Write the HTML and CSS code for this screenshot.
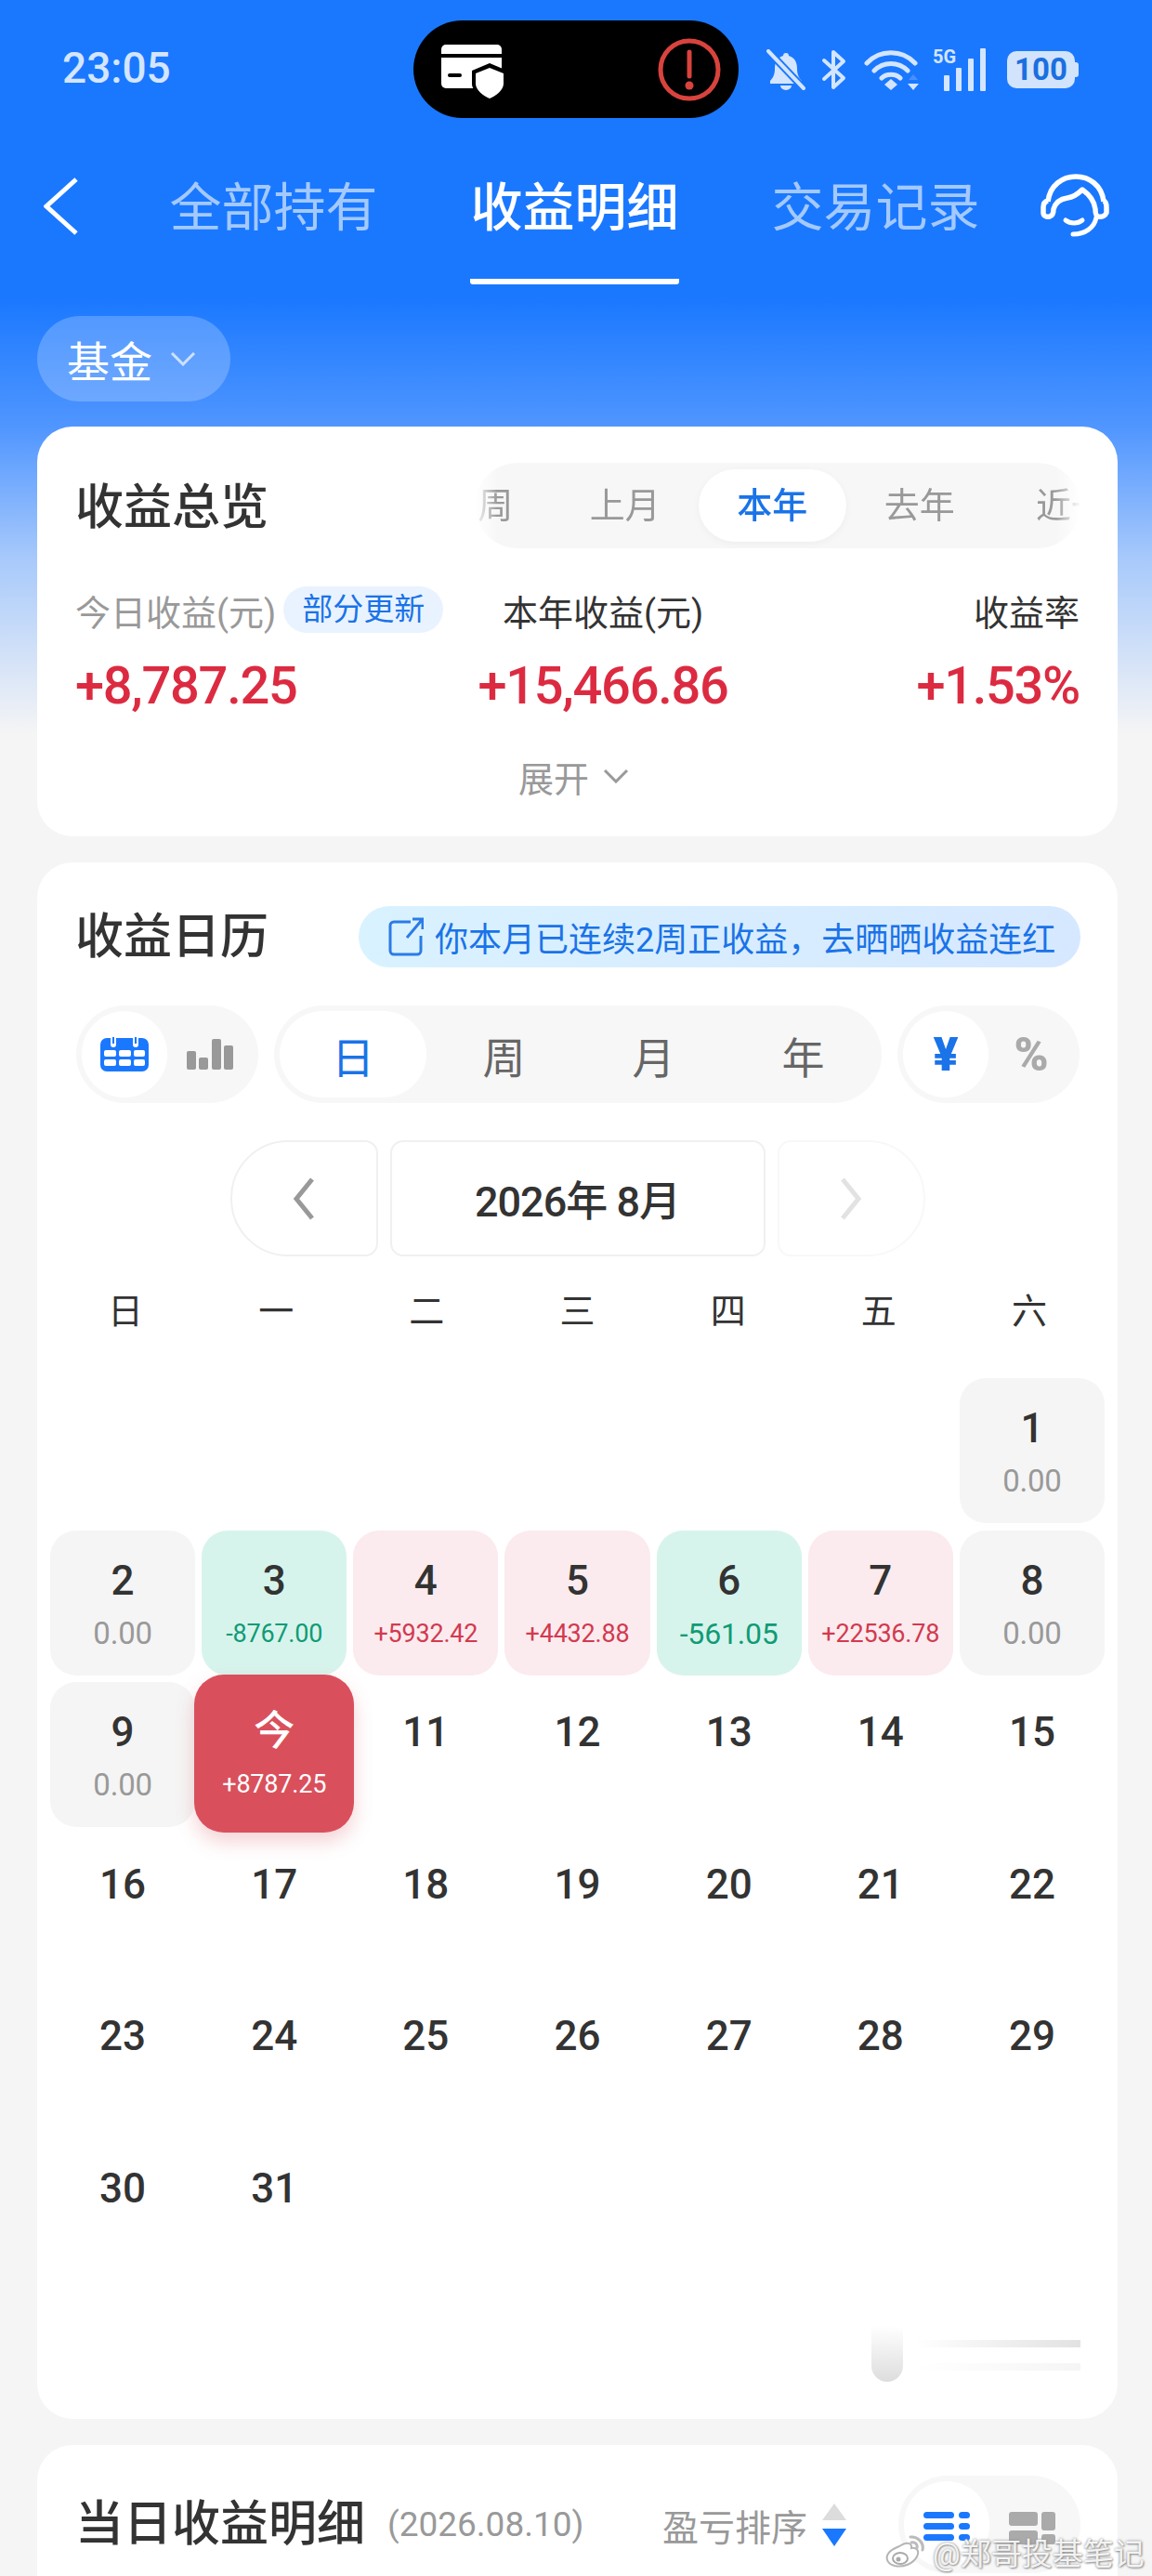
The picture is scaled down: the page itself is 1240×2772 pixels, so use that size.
FILE: index.html
```html
<!DOCTYPE html>
<html lang="zh-CN">
<head>
    <meta charset="UTF-8">
    <title>收益明细</title>
    <link rel="stylesheet" href="styles.css">
</head>
<body>
<div class="page">
    <div class="status">
        <span class="time">23:05</span>
        <div class="island">
            <svg class="card-ic" width="68" height="62" viewBox="15 16 68 62">
                <path d="M20 18H75a5 5 0 0 1 5 5V28H15V23a5 5 0 0 1 5-5Z" fill="#fff"/>
                <path d="M15 32H80V60a5 5 0 0 1-5 5H20a5 5 0 0 1-5-5Z" fill="#fff"/>
                <rect x="22" y="49" width="15" height="4" rx="2" fill="#000"/>
                <path d="M67 38L86 46V60C86 68 76 76 67 79C58 76 48 68 48 60V46Z" fill="#000"/>
                <path d="M67 43L82 49V60C82 67 74 73 67 76C60 73 52 67 52 60V49Z" fill="#fff"/>
            </svg>
            <svg width="70" height="70" viewBox="0 0 70 70">
                <ellipse cx="35" cy="35" rx="31" ry="31" fill="none" stroke="#d9433d" stroke-width="5"/>
                <path d="M35 16V42" stroke="#d9433d" stroke-width="5" stroke-linecap="round"/>
                <circle cx="35" cy="52" r="4.5" fill="#d9433d"/>
            </svg>
        </div>
        <div class="status-icons">
            <svg width="42" height="44" viewBox="0 0 42 44">
                <path d="M21 4a3 3 0 0 1 3 3c7 2 9 8 9 14 0 6 2 10 5 13v3H4v-3c3-3 5-7 5-13 0-6 2-12 9-14a3 3 0 0 1 3-3ZM15 39h12a6 5 0 0 1-12 0Z" fill="#d4e5ff"/>
                <path d="M2 2L40 42" stroke="#1a78ff" stroke-width="8"/>
                <path d="M2 2L40 42" stroke="#d4e5ff" stroke-width="4" stroke-linecap="round"/>
            </svg>
            <svg class="bt" width="28" height="44" viewBox="0 0 28 44">
                <path d="M3 12L24 31L13 41V3L24 13L3 32" fill="none" stroke="#d4e5ff" stroke-width="4" stroke-linejoin="round" stroke-linecap="round"/>
            </svg>
            <svg class="wifi" width="60" height="44" viewBox="0 0 60 44">
                <path d="M3 15C17 0 41 0 55 15M11 23C21 13 37 13 47 23M19 31C24 26 34 26 39 31" fill="none" stroke="#d4e5ff" stroke-width="5" stroke-linecap="round"/>
                <path d="M29 32L36 38L29 44L22 38Z" fill="#d4e5ff"/>
                <path d="M53 27L58 33H48Z" fill="#4a8fff"/>
                <path d="M53 44L59 37H47Z" fill="#d4e5ff"/>
            </svg>
            <svg class="signal" width="58" height="46" viewBox="0 0 58 46">
                <text x="0" y="16" class="fiveg">5G</text>
                <rect x="12" y="29" width="6" height="17" rx="1" fill="#d4e5ff"/>
                <rect x="25" y="21" width="6" height="25" rx="1" fill="#d4e5ff"/>
                <rect x="38" y="11" width="6" height="35" rx="1" fill="#d4e5ff"/>
                <rect x="51" y="0" width="6" height="46" rx="1" fill="#d4e5ff"/>
            </svg>
            <div class="battery"><span>100</span></div>
        </div>
    </div>

    <div class="tabs">
        <svg class="back" width="38" height="62" viewBox="0 0 38 62">
            <path d="M35 2L3 31L35 60" fill="none" stroke="#fff" stroke-width="5"/>
        </svg>
        <div class="tab first">全部持有</div>
        <div class="tab on">收益明细</div>
        <div class="tab">交易记录</div>
        <svg class="help" width="76" height="68" viewBox="14 12 76 68">
            <path d="M22 42C24 24 38 15 52 15C66 15 80 24 82 42" fill="none" stroke="#fff" stroke-width="5.5"/>
            <path d="M22 41C18 42 17 45 17 48V54C17 57 20 59 24 58C27 57 28 54 28 50C30 43 36 39 43 38C50 37 55 33 59 29C66 34 72 42 73 50C73 53 73 57 76 58C80 59 84 57 85 54V48C85 45 84 42 82 41" fill="none" stroke="#fff" stroke-width="5.5" stroke-linejoin="round"/>
            <path d="M41 62C46 66 54 66 59 62" fill="none" stroke="#fff" stroke-width="5" stroke-linecap="round"/>
            <path d="M74 59C72 70 62 77 49 77" fill="none" stroke="#fff" stroke-width="5" stroke-linecap="round"/>
        </svg>
    </div>

    <div class="filter">基金
        <svg width="28" height="16" viewBox="0 0 28 16"><path d="M2 2L14 14L26 2" fill="none" stroke="#cfe1ff" stroke-width="3"/></svg>
    </div>

    <div class="card overview">
        <div class="head">
            <div class="title">收益总览</div>
            <div class="range">
                <div class="range-track">
                    <span>上周</span>
                    <span>上月</span>
                    <span class="on">本年</span>
                    <span>去年</span>
                    <span class="last">近一年</span>
                </div>
            </div>
        </div>
        <div class="stats">
            <div class="stat">
                <div class="stat-label muted">今日收益(元)<em class="badge">部分更新</em></div>
                <div class="stat-num">+8,787.25</div>
            </div>
            <div class="stat mid">
                <div class="stat-label">本年收益(元)</div>
                <div class="stat-num">+15,466.86</div>
            </div>
            <div class="stat end">
                <div class="stat-label">收益率</div>
                <div class="stat-num">+1.53%</div>
            </div>
        </div>
        <div class="more">展开
            <svg width="28" height="16" viewBox="0 0 28 16"><path d="M2 2L14 14L26 2" fill="none" stroke="#999" stroke-width="3"/></svg>
        </div>
    </div>

    <div class="card calendar">
        <div class="head cal-head">
            <div class="title">收益日历</div>
            <div class="banner">
                <svg width="38" height="42" viewBox="0 0 38 42">
                    <path d="M24 5H6a4 4 0 0 0-4 4V36a4 4 0 0 0 4 4H31a4 4 0 0 0 4-4V20" fill="none" stroke="#2b7be6" stroke-width="3"/>
                    <path d="M20 22L36 3M26 2H37V13" fill="none" stroke="#2b7be6" stroke-width="3"/>
                </svg>
                你本月已连续2周正收益，去晒晒收益连红
            </div>
        </div>
        <div class="controls">
            <div class="seg small">
                <div class="seg-item on">
                    <svg width="54" height="38" viewBox="0 0 54 38">
                        <path d="M7 1H46a7 7 0 0 1 7 7V30a7 7 0 0 1-7 7H8a7 7 0 0 1-7-7V8a7 7 0 0 1 7-7Z" fill="#1a78ff"/>
                        <path d="M15 0V8M39 0V8" stroke="#fff" stroke-width="6" stroke-linecap="round"/>
                        <path d="M15 0V7M39 0V7" stroke="#1a78ff" stroke-width="2"/>
                        <g fill="#fff">
                            <rect x="5" y="14" width="13" height="7" rx="2"/><rect x="21" y="14" width="13" height="7" rx="2"/><rect x="37" y="14" width="12" height="7" rx="2"/>
                            <rect x="5" y="24" width="13" height="7" rx="2"/><rect x="21" y="24" width="13" height="7" rx="2"/><rect x="37" y="24" width="12" height="7" rx="2"/>
                        </g>
                    </svg>
                </div>
                <div class="seg-item">
                    <svg width="50" height="34" viewBox="0 0 50 34" fill="#999">
                        <rect x="0" y="13" width="10" height="20" rx="2"/><rect x="13" y="20" width="10" height="13" rx="2"/>
                        <rect x="27" y="0" width="10" height="33" rx="2"/><rect x="40" y="7" width="10" height="26" rx="2"/>
                    </svg>
                </div>
            </div>
            <div class="seg wide">
                <div class="seg-item on blue">日</div>
                <div class="seg-item">周</div>
                <div class="seg-item">月</div>
                <div class="seg-item">年</div>
            </div>
            <div class="seg small">
                <div class="seg-item on blue bold">¥</div>
                <div class="seg-item grey bold">%</div>
            </div>
        </div>
        <div class="month-nav">
            <div class="nav-btn prev">
                <svg width="26" height="46" viewBox="0 0 26 46"><path d="M22 2L5 23L22 44" fill="none" stroke="#999" stroke-width="5"/></svg>
            </div>
            <div class="month">2026年 8月</div>
            <div class="nav-btn next">
                <svg width="26" height="46" viewBox="0 0 26 46"><path d="M4 2L21 23L4 44" fill="none" stroke="#e2e2e2" stroke-width="5"/></svg>
            </div>
        </div>
        <div class="weekdays">
            <span>日</span><span>一</span><span>二</span><span>三</span><span>四</span><span>五</span><span>六</span>
        </div>
        <div class="days">
            <div class="day zero first-day"><b>1</b><i>0.00</i></div>
            <div class="day zero"><b>2</b><i>0.00</i></div>
            <div class="day loss"><b>3</b><i>-8767.00</i></div>
            <div class="day gain"><b>4</b><i>+5932.42</i></div>
            <div class="day gain"><b>5</b><i>+4432.88</i></div>
            <div class="day loss big"><b>6</b><i>-561.05</i></div>
            <div class="day gain"><b>7</b><i>+22536.78</i></div>
            <div class="day zero"><b>8</b><i>0.00</i></div>
            <div class="day zero"><b>9</b><i>0.00</i></div>
            <div class="day today"><b>今</b><i>+8787.25</i></div>
            <div class="day"><b>11</b></div>
            <div class="day"><b>12</b></div>
            <div class="day"><b>13</b></div>
            <div class="day"><b>14</b></div>
            <div class="day"><b>15</b></div>
            <div class="day"><b>16</b></div>
            <div class="day"><b>17</b></div>
            <div class="day"><b>18</b></div>
            <div class="day"><b>19</b></div>
            <div class="day"><b>20</b></div>
            <div class="day"><b>21</b></div>
            <div class="day"><b>22</b></div>
            <div class="day"><b>23</b></div>
            <div class="day"><b>24</b></div>
            <div class="day"><b>25</b></div>
            <div class="day"><b>26</b></div>
            <div class="day"><b>27</b></div>
            <div class="day"><b>28</b></div>
            <div class="day"><b>29</b></div>
            <div class="day"><b>30</b></div>
            <div class="day"><b>31</b></div>
        </div>
        <div class="ghost">
            <div class="ghost-thumb"></div>
            <div class="ghost-lines"><span></span><span></span></div>
        </div>
    </div>

    <div class="card detail">
        <div class="detail-row">
            <div class="title">当日收益明细</div>
            <div class="date">(2026.08.10)</div>
            <div class="sort">盈亏排序
                <svg width="28" height="46" viewBox="0 0 28 46">
                    <path d="M14 0L27 18H1Z" fill="#dcdcdc"/>
                    <path d="M14 46L27 27H1Z" fill="#1a78ff"/>
                </svg>
            </div>
            <div class="seg small">
                <div class="seg-item on">
                    <svg width="50" height="40" viewBox="0 0 50 40" fill="#1a78ff">
                        <rect x="0" y="0" width="33" height="7" rx="3.5"/><rect x="38" y="0" width="12" height="7" rx="3.5"/>
                        <rect x="0" y="12" width="33" height="7" rx="3.5"/><rect x="38" y="12" width="12" height="7" rx="3.5"/>
                        <rect x="0" y="24" width="33" height="7" rx="3.5"/><rect x="38" y="24" width="12" height="7" rx="3.5"/>
                    </svg>
                </div>
                <div class="seg-item">
                    <svg width="50" height="40" viewBox="0 0 50 40" fill="#aaa">
                        <rect x="0" y="0" width="31" height="15" rx="3"/><rect x="35" y="0" width="15" height="20" rx="3"/>
                        <rect x="0" y="20" width="31" height="15" rx="3"/><rect x="35" y="24" width="15" height="11" rx="3"/>
                    </svg>
                </div>
            </div>
        </div>
    </div>

    <div class="mark">
        <svg width="44" height="38" viewBox="0 0 44 38">
            <path d="M16 13C24 8 30 9 29 15C35 14 38 18 35 24C31 32 20 36 11 34C3 32 1 26 4 21C6 17 11 15 16 13Z" fill="#fff" stroke="#b5b5b5" stroke-width="2"/>
            <ellipse cx="17" cy="26" rx="8" ry="6" fill="none" stroke="#aaa" stroke-width="2"/>
            <circle cx="15" cy="27" r="2.5" fill="#aaa"/>
            <path d="M28 3C35 2 43 9 41 17M29 9C33 8 36 11 35 15" fill="none" stroke="#bbb" stroke-width="3" stroke-linecap="round"/>
        </svg>
        <span>@郑哥投基笔记</span>
    </div>
</div>
</body>
</html>
```

FILE: styles.css
```css
*{
    box-sizing: border-box;
}
html,body{
    margin:0;
    padding:0;
}
body{
    font-family: Roboto, "Noto Sans CJK SC", sans-serif;
    color:#333;
}
.page{
    position: relative;
    width:1240px;
    height:2772px;
    overflow: hidden;
    background: linear-gradient(#1a78ff 320px,#5096ff 460px,#a7c9fb 600px,#f5f5f5 790px);
}

/* status bar */
.status{
    display: flex;
    align-items: center;
    height:105px;
    margin-top:22px;
    padding-left:67px;
}
.time{
    width:378px;
    font-size:46px;
    font-weight:500;
    color:#d4e5ff;
    margin-top:-3px;
}
.island{
    display: flex;
    align-items: center;
    justify-content: space-between;
    width:350px;
    height:105px;
    padding:0 18px 0 30px;
    border-radius:53px;
    background-color:#000;
}
.card-ic{
    margin-top:5px;
}
.status-icons{
    display: flex;
    align-items: center;
    margin-left:30px;
}
.bt{
    margin-left:17px;
}
.wifi{
    margin-left:18px;
}
.signal{
    margin-left:14px;
    overflow: visible;
}
.fiveg{
    font-size:20px;
    font-weight:700;
    fill:#d4e5ff;
}
.battery{
    display: flex;
    align-items: center;
    justify-content: center;
    position: relative;
    width:73px;
    height:40px;
    margin-left:22px;
    border-radius:10px;
    background-color:#d2e3fc;
    font-size:33px;
    font-weight:700;
    color:#1a6fe0;
}
.battery:after{
    content:"";
    position: absolute;
    right:-4px;
    top:12px;
    width:4px;
    height:16px;
    border-radius:0 3px 3px 0;
    background-color:#d2e3fc;
}

/* tabs */
.tabs{
    display: flex;
    height:116px;
    margin-top:63px;
    padding-left:47px;
}
.back{
    margin-top:1px;
}
.tab{
    width:225px;
    height:116px;
    margin-left:99px;
    font-size:56px;
    line-height:69px;
    text-align: center;
    color:#a3c9ff;
}
.tab.first{
    margin-left:97px;
}
.tab.on{
    color:#fff;
    font-weight:500;
    border-bottom:6px solid #fff;
    border-radius:0 0 3px 3px;
}
.help{
    margin-top:-3px;
    margin-left:65px;
}

.filter{
    display: flex;
    align-items: center;
    gap:19px;
    width:208px;
    height:92px;
    margin:34px 0 0 40px;
    padding-left:32px;
    border-radius:46px;
    background-color:rgba(255,255,255,.22);
    font-size:46px;
    color:#fff;
}

/* cards */
.card{
    width:1163px;
    margin:27px 0 0 40px;
    border-radius:38px;
    background-color:#fff;
}
.head{
    display: flex;
    align-items: center;
    justify-content: space-between;
    padding:0 40px 0 41px;
}
.title{
    font-size:52px;
    font-weight:500;
    line-height:70px;
    color:#333;
}
.overview{
    height:441px;
    padding-top:39px;
}
.overview .title{
    margin-top:5px;
}
.range{
    width:652px;
    height:92px;
    padding:7px 0;
    border-radius:46px;
    background-color:#f7f7f7;
    overflow: hidden;
    -webkit-mask-image: linear-gradient(90deg,transparent 0,#000 24px,#000 625px,transparent 652px);
}
.range-track{
    display: flex;
    margin-left:-76px;
}
.range-track span{
    flex:none;
    width:158.5px;
    height:78px;
    font-size:38px;
    line-height:78px;
    text-align: center;
    color:#999;
}
.range-track .on{
    border-radius:39px;
    background-color:#fff;
    color:#1a73e8;
    font-weight:500;
    box-shadow:0 2px 8px rgba(0,0,0,.04);
}
.range-track .last{
    width:200px;
    padding-left:46px;
    text-align: left;
}
.stats{
    display: grid;
    grid-template-columns:428px 280px 1fr;
    margin-top:41px;
    padding:0 41px;
}
.stat-label{
    display: flex;
    align-items: center;
    height:50px;
    font-size:38px;
    white-space: nowrap;
}
.muted{
    color:#999;
}
.badge{
    display: block;
    height:50px;
    margin-left:8px;
    padding:0 20px;
    border-radius:25px;
    background-color:#e9f3ff;
    color:#1a73e8;
    font-style: normal;
    font-size:33px;
    line-height:50px;
}
.stat-num{
    margin-top:22px;
    font-size:56px;
    font-weight:500;
    line-height:70px;
    letter-spacing:-1.3px;
    color:#dc2b41;
    white-space: nowrap;
}
.mid{
    text-align: center;
}
.mid .stat-label{
    justify-content: center;
}
.end{
    text-align: right;
}
.end .stat-label{
    justify-content: flex-end;
}
.more{
    display: flex;
    align-items: center;
    justify-content: center;
    gap:15px;
    height:50px;
    margin-top:37px;
    padding-right:8px;
    font-size:38px;
    color:#999;
}

/* calendar */
.calendar{
    height:1675px;
    margin-top:28px;
    padding-top:47px;
}
.cal-head{
    height:66px;
}
.cal-head .title{
    margin-top:2px;
}
.banner{
    display: flex;
    align-items: center;
    gap:12px;
    width:777px;
    height:66px;
    padding-left:32px;
    border-radius:33px;
    background: linear-gradient(90deg,#d9f2ff,#d6e8ff);
    font-size:36px;
    color:#1a73e8;
    white-space: nowrap;
}
.controls{
    display: flex;
    gap:17px;
    margin-top:41px;
    padding-left:42px;
}
.seg{
    display: flex;
    height:105px;
    padding:6px;
    border-radius:53px;
    background-color:#f7f7f7;
}
.seg.small{
    width:196px;
}
.seg.wide{
    width:654px;
}
.seg-item{
    display: flex;
    flex:1;
    align-items: center;
    justify-content: center;
    height:93px;
    font-size:46px;
    color:#666;
}
.seg-item.on{
    background-color:#fff;
    border-radius:47px;
}
.seg.small .seg-item{
    flex:none;
    width:92px;
}
.seg.wide .seg-item{
    flex:none;
    width:161px;
}
.seg.wide .on{
    width:158px;
    margin-right:3px;
}
.blue{
    color:#1a73e8;
}
.grey{
    color:#aaa;
}
.bold{
    font-weight:900;
    font-size:50px;
}
.month-nav{
    display: flex;
    justify-content: center;
    gap:13px;
    margin-top:40px;
}
.nav-btn,.month{
    display: flex;
    align-items: center;
    justify-content: center;
    height:125px;
    border:2px solid #f0f0f0;
    border-radius:14px;
}
.nav-btn{
    width:159px;
}
.prev{
    border-radius:62px 14px 14px 62px;
}
.next{
    border-color:#f8f8f8;
    border-radius:14px 62px 62px 14px;
}
.month{
    width:404px;
    font-size:45px;
    font-weight:500;
    letter-spacing:-1px;
}
.weekdays{
    display: grid;
    grid-template-columns:repeat(7,1fr);
    margin:34px 14px 0;
    font-size:38px;
    line-height:50px;
    text-align: center;
}
.days{
    display: grid;
    grid-template-columns:repeat(7,1fr);
    grid-auto-rows:156px;
    gap:7.5px 7px;
    margin:47px 14px 0;
}
.day{
    display: flex;
    flex-direction: column;
    align-items: center;
    padding-top:29px;
    border-radius:28px;
}
.day b{
    font-size:44px;
    font-weight:500;
    line-height:50px;
}
.day i{
    margin-top:12px;
    font-style: normal;
    font-size:27px;
    line-height:40px;
    letter-spacing:-.2px;
    white-space: nowrap;
}
.first-day{
    grid-column-start:7;
}
.zero{
    background-color:#f5f5f5;
}
.zero i{
    font-size:33px;
    color:#999;
}
.gain{
    background-color:#fbebee;
}
.gain i{
    color:#d23a50;
}
.loss{
    background-color:#d7f4ec;
}
.loss i{
    color:#0f9b76;
}
.loss.big i{
    font-size:32px;
}
.today{
    position: relative;
    margin:-8px -8px -6px;
    padding-top:36px;
    border-radius:32px;
    background-color:#d9505c;
    color:#fff;
    box-shadow:0 10px 20px rgba(217,80,92,.25);
}
.ghost{
    display: flex;
    justify-content: flex-end;
    height:60px;
    margin-top:46px;
    padding-right:40px;
}
.ghost-thumb{
    width:34px;
    height:60px;
    border-radius:0 0 17px 17px;
    background: linear-gradient(#fff,#ddd);
}
.ghost-lines{
    width:178px;
    margin-left:13px;
    padding-top:15px;
}
.ghost-lines span{
    display: block;
    height:8px;
    margin-bottom:17px;
    background: linear-gradient(90deg,#fff,#e2e2e2);
}
.ghost-lines span+span{
    background: linear-gradient(90deg,#fff,#f5f5f5);
}

/* detail */
.detail{
    height:300px;
    margin-top:28px;
    padding-top:33px;
}
.detail-row{
    display: flex;
    align-items: center;
    padding:0 40px 0 41px;
}
.date{
    margin-left:24px;
    font-size:37px;
    color:#999;
}
.sort{
    display: flex;
    align-items: center;
    gap:15px;
    margin-left:auto;
    margin-right:55px;
    font-size:39px;
    color:#999;
}
.detail-row .seg-item svg{
    align-self: flex-start;
    margin-top:33px;
}
.mark{
    position: absolute;
    left:952px;
    top:2722px;
    display: flex;
    align-items: center;
    gap:8px;
    font-size:33px;
    color:rgba(255,255,255,.88);
    text-shadow:0 0 3px #888,1px 1px 2px #999;
    white-space: nowrap;
}
```
